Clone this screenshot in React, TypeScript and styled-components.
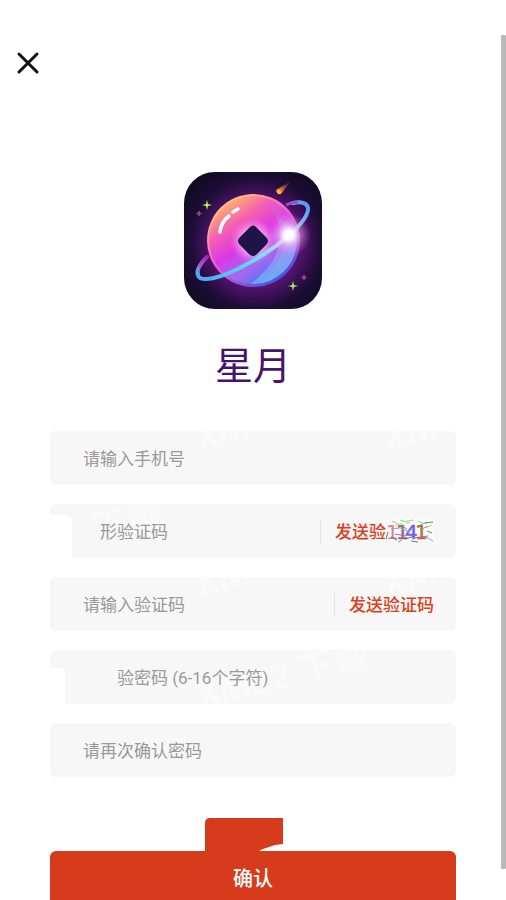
import React from "react";
import styled, { createGlobalStyle } from "styled-components";

const GlobalStyle = createGlobalStyle`
  * { box-sizing: border-box; }
  body {
    margin: 0;
    background: #fff;
    font-family: Roboto, "Noto Sans CJK SC", sans-serif;
  }
  button, input { font: inherit; }
`;

const Page = styled.main`
  position: relative;
  height: 100vh;
  overflow: hidden;
  padding: 48px 50px 0;
  display: flex;
  flex-direction: column;
`;

const CloseButton = styled.button`
  width: 30px;
  height: 30px;
  margin-left: -37px;
  padding: 0;
  border: 0;
  background: none;
  flex: none;
  svg { display: block; }
`;

const Brand = styled.header`
  display: flex;
  flex-direction: column;
  align-items: center;
  flex: none;
  padding-top: 94px;
  svg { display: block; }
`;

const Title = styled.h1`
  margin: 28px 0 0;
  color: #46146e;
  font-size: 38px;
  font-weight: 400;
  line-height: 56px;
`;

const Form = styled.form`
  display: flex;
  flex-direction: column;
  gap: 19px;
  margin-top: 37px;
  flex: none;
`;

const Field = styled.div<{ $indent?: number }>`
  position: relative;
  display: flex;
  align-items: center;
  height: 54px;
  padding: 1px 22px 0 ${(p) => p.$indent ?? 33}px;
  border-radius: 6px;
  background: #f7f7f7;
  overflow: hidden;
`;

const Input = styled.input`
  position: relative;
  flex: 1;
  min-width: 0;
  height: 100%;
  padding: 0;
  border: 0;
  outline: 0;
  background: none;
  color: #333;
  font-size: 17px;
  &::placeholder { color: #999; opacity: 1; }
`;

const Divider = styled.span`
  width: 1px;
  height: 24px;
  margin-right: 14px;
  background: #e4e4e4;
`;

const SendButton = styled.button`
  padding: 0;
  border: 0;
  background: none;
  color: #dc3f20;
  font-size: 17px;
  font-weight: 500;
  line-height: 24px;
  white-space: nowrap;
`;

const Captcha = styled.svg`
  position: relative;
  flex: none;
`;

const Notch = styled.span<{ $width: number; $top: number }>`
  position: absolute;
  left: 0;
  bottom: 0;
  width: ${(p) => p.$width}px;
  top: ${(p) => p.$top}px;
  background: #fff;
  border-top-right-radius: 5px;
`;

const Watermark = styled.span<{ $left: number; $top: number }>`
  position: absolute;
  left: ${(p) => p.$left}px;
  top: ${(p) => p.$top}px;
  color: #fafafa;
  font-size: 36px;
  font-weight: 700;
  line-height: 36px;
  white-space: nowrap;
  transform: rotate(-14deg);
  pointer-events: none;
`;

const Submit = styled.div`
  display: flex;
  flex-direction: column;
  margin-top: 22px;
  svg { display: block; margin-left: 155px; }
`;

const SubmitButton = styled.button`
  height: 54px;
  padding: 2px 0 0;
  border: 0;
  border-radius: 6px;
  background: #d63c1c;
  color: #fff;
  font-size: 20px;
  font-weight: 500;
  line-height: 30px;
`;

const ScrollThumb = styled.span`
  position: absolute;
  top: 35px;
  right: 0;
  bottom: 31px;
  width: 5px;
  border-radius: 1px;
  background: #b8b8b8;
`;

const Logo = () => (
  <svg width="138" height="138" viewBox="0 0 138 138" role="img" aria-label="星月">
    <defs>
      <radialGradient id="sky" cx=".52" cy=".52" r=".65">
        <stop offset="0" stopColor="#a51cb4" />
        <stop offset=".5" stopColor="#54136f" />
        <stop offset=".72" stopColor="#1f0d38" />
        <stop offset="1" stopColor="#0c0a20" />
      </radialGradient>
      <linearGradient id="ball" x1=".18" y1=".08" x2=".76" y2=".95">
        <stop offset="0" stopColor="#ffb36c" />
        <stop offset=".25" stopColor="#f45fb2" />
        <stop offset=".5" stopColor="#da38e6" />
        <stop offset=".73" stopColor="#a568ef" />
        <stop offset="1" stopColor="#4774f0" />
      </linearGradient>
      <linearGradient id="rim" x1=".15" y1=".1" x2=".8" y2="1">
        <stop offset="0" stopColor="#ffcb71" />
        <stop offset=".45" stopColor="#f35ad8" />
        <stop offset="1" stopColor="#3450dc" />
      </linearGradient>
      <linearGradient id="shade" x1=".6" y1="0" x2=".5" y2="1">
        <stop offset="0" stopColor="#e153d2" stopOpacity=".25" />
        <stop offset=".5" stopColor="#c287f4" />
        <stop offset="1" stopColor="#58c0f8" />
      </linearGradient>
      <linearGradient id="orbit" x1="14" y1="106" x2="124" y2="31" gradientUnits="userSpaceOnUse">
        <stop offset="0" stopColor="#4ca7ef" />
        <stop offset=".4" stopColor="#65d8ff" />
        <stop offset=".7" stopColor="#b6e5ff" />
        <stop offset="1" stopColor="#5691f4" />
      </linearGradient>
      <linearGradient id="tail" x1="0" y1="1" x2="1" y2="0">
        <stop offset="0" stopColor="#5aaaf0" />
        <stop offset=".5" stopColor="#a14fd0" />
        <stop offset="1" stopColor="#a02ab5" />
      </linearGradient>
      <linearGradient id="comet" x1="0" y1="1" x2="1" y2="0">
        <stop offset="0" stopColor="#ffc04d" />
        <stop offset=".4" stopColor="#c86c2b" />
        <stop offset="1" stopColor="#54204e" stopOpacity=".2" />
      </linearGradient>
      <radialGradient id="flare">
        <stop offset="0" stopColor="#fff" />
        <stop offset=".22" stopColor="#fff" stopOpacity=".95" />
        <stop offset=".5" stopColor="#ffc2f4" stopOpacity=".5" />
        <stop offset="1" stopColor="#f56dd6" stopOpacity="0" />
      </radialGradient>
      <radialGradient id="halo">
        <stop offset=".5" stopColor="#ffb8ee" stopOpacity=".85" />
        <stop offset="1" stopColor="#f56fe4" stopOpacity="0" />
      </radialGradient>
      <clipPath id="disc"><circle cx="69" cy="68" r="44" /></clipPath>
    </defs>
    <rect width="138" height="137" rx="31" fill="url(#sky)" />
    <circle cx="69.500" cy="68.500" r="46.500" fill="url(#rim)" />
    <circle cx="69" cy="68" r="44" fill="url(#ball)" />
    <g clipPath="url(#disc)">
      <path d="M78 31C103 46 106 84 65 113L88 122L128 79L113 25Z" fill="url(#shade)" opacity=".75" />
      <path d="M91 43C111 60 99 94 73 113L106 108L121 65Z" fill="#65c8f5" opacity=".3" />
    </g>
    <circle cx="69" cy="69" r="23" fill="url(#halo)" />
    <path d="M65 56Q69 51 73 56L82 65Q86 69 82 73L73 82Q69 86 65 82L56 73Q52 69 56 65Z" fill="#1d1549" />
    <path d="M23 85C16 92 12 98 14 103" fill="none" stroke="url(#tail)" strokeWidth="4" strokeLinecap="round" />
    <path d="M14 103C16 111 37 107 65 91C96 74 122 51 124 38C125 31 117 29 109 31" fill="none" stroke="url(#orbit)" strokeWidth="4" strokeLinecap="round" />
    <path d="M102 33Q108 30 114 30" fill="none" stroke="#9a4fd0" strokeWidth="3" />
    <circle cx="105" cy="63" r="22" fill="url(#flare)" />
    <path d="M36 60Q37 50 45 44M49 40L54 37" fill="none" stroke="#fff" strokeWidth="3.500" strokeLinecap="round" />
    <path d="M92 18L107 9L97 22Q93 23 92 18Z" fill="url(#comet)" />
    <circle cx="95" cy="20" r="2" fill="#f6bc3b" />
    <path d="M23 28L24 32L28 33L24 34L23 38L22 34L18 33L22 32Z" fill="#b8f05c" />
    <path d="M109 109L110 113L114 114L110 115L109 119L108 115L104 114L108 113Z" fill="#a8ef62" />
    <path d="M15 39V44M12.500 41.500H17.500M120 103V108M117.500 105.500H122.500" stroke="#a74c8b" strokeWidth="1.500" />
  </svg>
);

const CaptchaPicture = () => (
  <Captcha width="48" height="28" viewBox="4 0 48 28" role="img" aria-label="1141">
    <rect x="8" y="1" width="43" height="23" fill="#fff" opacity=".6" />
    <g fontFamily="DejaVu Sans" fontSize="20" strokeWidth=".5">
      <text x="4" y="21" fill="#ee788b">1</text>
      <text x="14" y="21" fill="#8d716e" stroke="#8d716e">1</text>
      <text x="23" y="21" fill="#745cf4" stroke="#745cf4">4</text>
      <text x="33" y="21" fill="#ad7914" stroke="#ad7914">1</text>
    </g>
    <g fill="none" strokeWidth="1">
      <path d="M10 3L16 6M18 2L28 5M36 3L43 6" stroke="#71da9e" />
      <path d="M13 8L20 5M25 3L32 2M44 10L50 7" stroke="#c7d64c" />
      <path d="M9 11L18 10L28 14M38 7L45 4M44 19L51 23" stroke="#83a9dd" />
      <path d="M6 14L4 21M9 19L15 22M23 21L33 18" stroke="#348a5b" />
      <path d="M31 20L46 18M13 16L24 18" stroke="#dc45db" />
      <path d="M43 5L51 4M45 13L50 15M29 23L36 24" stroke="#68815c" />
      <path d="M20 8L25 11M40 11L46 8M16 24L20 22" stroke="#8b8bd0" />
    </g>
  </Captcha>
);

export default function App() {
  return (
    <>
      <GlobalStyle />
      <Page>
        <CloseButton type="button" aria-label="关闭">
          <svg width="30" height="30" viewBox="0 0 30 30" fill="none" stroke="#111" strokeWidth="3" strokeLinecap="round">
            <path d="M6 6L24 24M24 6L6 24" />
          </svg>
        </CloseButton>
        <Brand>
          <Logo />
          <Title>星月</Title>
        </Brand>
        <Form>
          <Field>
            <Watermark $left={145} $top={-17} aria-hidden>XM</Watermark>
            <Watermark $left={333} $top={-17} aria-hidden>XM</Watermark>
            <Input type="tel" aria-label="手机号" placeholder="请输入手机号" />
          </Field>
          <Field $indent={50}>
            <Watermark $left={42} $top={0} aria-hidden>下载</Watermark>
            <Notch $width={22} $top={11} />
            <Input aria-label="图形验证码" placeholder="形验证码" />
            <Divider />
            <SendButton type="button">发送验</SendButton>
            <CaptchaPicture />
          </Field>
          <Field>
            <Watermark $left={145} $top={-17} aria-hidden>XM</Watermark>
            <Watermark $left={333} $top={-17} aria-hidden>XM</Watermark>
            <Input aria-label="短信验证码" placeholder="请输入验证码" />
            <Divider />
            <SendButton type="button">发送验证码</SendButton>
          </Field>
          <Field $indent={67}>
            <Watermark $left={145} $top={8} aria-hidden>XM02 下载</Watermark>
            <Notch $width={15} $top={18} />
            <Input type="password" aria-label="密码" placeholder="验密码 (6-16个字符)" />
          </Field>
          <Field>
            <Input type="password" aria-label="确认密码" placeholder="请再次确认密码" />
          </Field>
          <Submit>
            <svg width="78" height="33" viewBox="0 0 78 33" aria-hidden>
              <path d="M0 33V5Q0 0 5 0H78V26L70 27L64 29L58 31L54 33Z" fill="#d63c1c" />
            </svg>
            <SubmitButton type="submit">确认</SubmitButton>
          </Submit>
        </Form>
        <ScrollThumb aria-hidden />
      </Page>
    </>
  );
}
